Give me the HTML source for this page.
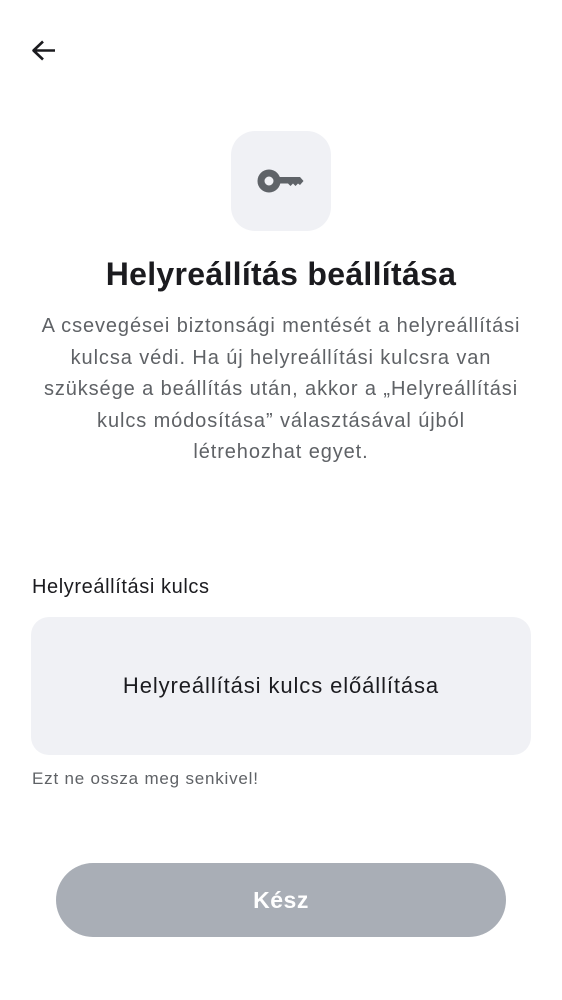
<!DOCTYPE html>
<html><head><meta charset="utf-8"><style>
body{margin:0;width:562px;height:1000px;background:#fff;font-family:"Liberation Sans",sans-serif;position:relative;overflow:hidden}
.a{position:absolute}
</style></head><body>
<svg class="a" style="left:28px;top:36px" width="30" height="30" viewBox="0 0 30 30"><path d="M27 14.5H6M15 5.5L5.5 14.5L15 23.5" fill="none" stroke="#1b1b1f" stroke-width="2.6" stroke-linejoin="round"/></svg>
<div class="a" style="left:231px;top:131px;width:100px;height:100px;border-radius:24px;background:#f0f1f5"></div>
<svg class="a" style="left:231px;top:131px" width="100" height="100" viewBox="0 0 100 100"><circle cx="38" cy="50" r="8" fill="none" stroke="#5f6368" stroke-width="7"/><path fill="#5f6368" d="M45 46H69L72.5 50L69 54L67 52.5L64.5 55L62 52.5L59.5 55L57 52.5H45Z"/></svg>
<div class="a" style="left:0;width:562px;top:256px;text-align:center;font-size:32px;font-weight:bold;color:#1b1b1f;letter-spacing:0.3px">Helyreállítás beállítása</div>
<div class="a" style="left:0;width:562px;top:311px;text-align:center;font-size:20px;line-height:31.5px;color:#5f6266;letter-spacing:0.9px;white-space:nowrap">A csevegései biztonsági mentését a helyreállítási<br>kulcsa védi. Ha új helyreállítási kulcsra van<br>szüksége a beállítás után, akkor a „Helyreállítási<br>kulcs módosítása” választásával újból<br>létrehozhat egyet.</div>
<div class="a" style="left:32px;top:576px;font-size:20px;color:#1b1b1f;letter-spacing:0.6px">Helyreállítási kulcs</div>
<div class="a" style="left:31px;top:617px;width:500px;height:138px;border-radius:18px;background:#f0f1f5;text-align:center;line-height:138px;font-size:22px;color:#1b1b1f;letter-spacing:0.9px">Helyreállítási kulcs előállítása</div>
<div class="a" style="left:32px;top:769px;font-size:17px;color:#5f6266;letter-spacing:0.8px">Ezt ne ossza meg senkivel!</div>
<div class="a" style="left:56px;top:863px;width:450px;height:74px;border-radius:37px;background:#a9aeb6;color:#fff;font-weight:bold;font-size:23px;text-align:center;line-height:74px;letter-spacing:0.5px">Kész</div>
</body></html>
